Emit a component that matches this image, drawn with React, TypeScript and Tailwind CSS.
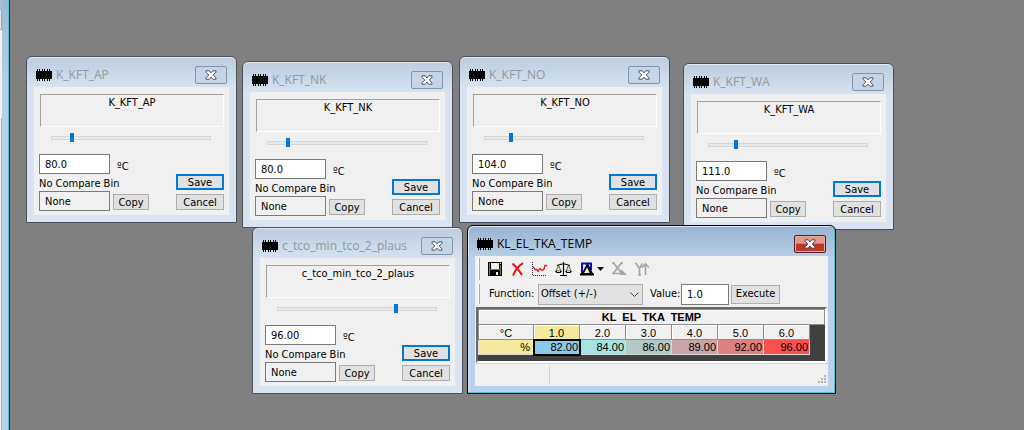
import React from "react";

const UI_FONT = "font-['DejaVu_Sans_Condensed','Noto_Sans',sans-serif]";

function ChipIcon() {
  return (
    <svg width="16" height="12" viewBox="0 0 16 12" shapeRendering="crispEdges" aria-hidden="true">
      <rect x="0" y="2" width="16" height="8" fill="#000" />
      <path
        d="M1 0h1v2h-1zM3 0h1v2h-1zM6 0h1v2h-1zM8 0h1v2h-1zM11 0h1v2h-1zM13 0h1v2h-1zM1 10h1v2h-1zM3 10h1v2h-1zM6 10h1v2h-1zM8 10h1v2h-1zM11 10h1v2h-1zM13 10h1v2h-1z"
        fill="#000"
      />
    </svg>
  );
}

function CloseGlyph({ edge }: { edge: string }) {
  return (
    <svg width="12" height="10" viewBox="0 0 12 10" aria-hidden="true">
      <path
        d="M1 .8h3.2L6 2.9 7.800 .8H11v1.400L8.200 5 11 7.800v1.400H7.800L6 7.100 4.200 9.200H1V7.800L3.800 5 1 2.200z"
        fill="#fff"
        stroke={edge}
        strokeWidth="1"
        strokeLinejoin="round"
      />
    </svg>
  );
}

type DialogProps = {
  title: string;
  value: string;
  position: number;
  place: string;
};

function ParameterDialog({ title, value, position, place }: DialogProps) {
  const button =
    "flex h-4 items-center justify-center whitespace-nowrap bg-[#e1e1e1] text-[11px] leading-none";
  return (
    <section
      aria-label={title}
      className={`absolute w-[211px] rounded-t-md border border-[#4b4f56] bg-[#d8e4f1] bg-linear-to-b from-[#bccddf] from-0% to-[#d8e4f1] to-20% px-[7px] pb-[7px] shadow-[inset_0_1px_0_#e4edf6] ${place}`}
    >
      <header className="flex h-[30px] items-center gap-1 pl-[2px] pr-[2px] pt-[6px]">
        <ChipIcon />
        <h2 className="flex-1 whitespace-nowrap font-['Open_Sans','Noto_Sans',sans-serif] text-[12px] leading-4 text-[#8f979f]">
          {title}
        </h2>
        <button
          type="button"
          aria-label="Close"
          className="flex h-[18px] w-8 items-center justify-center rounded-xs border border-[#8393ab] bg-[#c6d5e6]"
        >
          <CloseGlyph edge="#4a5361" />
        </button>
      </header>
      <div className="bg-[#f0f0f0] px-[5px] pb-1 pt-[7px]">
        <p className="ml-px h-[33px] border border-b-white border-l-[#a0a0a0] border-r-white border-t-[#a0a0a0] text-center text-[11px] leading-4">
          {title}
        </p>
        <input
          type="range"
          aria-label={`${title} level`}
          min={0}
          max={156}
          defaultValue={position}
          className="mx-3 mb-3 mt-[6px] block h-[9px] w-40 appearance-none bg-transparent [&::-webkit-slider-runnable-track]:h-1 [&::-webkit-slider-runnable-track]:border [&::-webkit-slider-runnable-track]:border-[#d6d6d6] [&::-webkit-slider-runnable-track]:bg-[#e7eaea] [&::-webkit-slider-thumb]:-mt-1 [&::-webkit-slider-thumb]:h-[9px] [&::-webkit-slider-thumb]:w-1 [&::-webkit-slider-thumb]:appearance-none [&::-webkit-slider-thumb]:bg-[#0078d7]"
        />
        <div className="flex h-5 items-end gap-[7px]">
          <input
            type="text"
            aria-label={`${title} value`}
            defaultValue={value}
            className="h-5 w-[71px] border border-[#7a7a7a] bg-white px-[5px] text-[11px] leading-none"
          />
          <span className="text-[11px] leading-[14px]">ºC</span>
        </div>
        <div className="flex items-end justify-between">
          <div>
            <label htmlFor={`${title}-bin`} className="block h-[17px] whitespace-nowrap pt-[2px] text-[11px] leading-4">
              No Compare Bin
            </label>
            <div className="flex items-end gap-[3px]">
              <input
                id={`${title}-bin`}
                type="text"
                readOnly
                defaultValue="None"
                className="h-5 w-[71px] border border-[#7a7a7a] bg-[#f0f0f0] px-[5px] text-[11px] leading-none"
              />
              <button type="button" className={`${button} mb-px w-9 border border-[#adadad]`}>
                Copy
              </button>
            </div>
          </div>
          <div className="flex flex-col gap-1 pb-px">
            <button type="button" className={`${button} w-12 border-2 border-[#0078d7]`}>
              Save
            </button>
            <button type="button" className={`${button} w-12 border border-[#adadad]`}>
              Cancel
            </button>
          </div>
        </div>
      </div>
    </section>
  );
}

function SaveIcon() {
  return (
    <svg width="14" height="14" viewBox="0 0 14 14" shapeRendering="crispEdges" aria-hidden="true">
      <rect width="14" height="14" fill="#000" />
      <path d="M1 1h1v12h-1zM12 3h1v10h-1zM2 7h10v1h-10z" fill="#7d7d32" />
      <rect x="3" y="1" width="8" height="6" fill="#f0f0f0" />
      <rect x="12" y="1" width="1" height="1" fill="#f0f0f0" />
      <rect x="8" y="10" width="2" height="3" fill="#f0f0f0" />
    </svg>
  );
}

function DeleteIcon() {
  return (
    <svg width="14" height="14" viewBox="0 0 14 14" aria-hidden="true">
      <path d="M2.500 1.500C5.500 4 9.500 8.500 12 13M13 1C8.500 4 5 8.500 3 13.500" fill="none" stroke="#e80c0c" strokeWidth="2" />
    </svg>
  );
}

function GraphIcon() {
  return (
    <svg width="15" height="14" viewBox="0 0 15 14" aria-hidden="true">
      <path d="M.5 0v13.500H15" fill="none" stroke="#222" strokeDasharray="1 1" />
      <path d="M1 4.500l2 3h2l1 2 2-3 2 2 2-1.500 1-3.500H15" fill="none" stroke="#d8181c" strokeWidth="1.300" />
    </svg>
  );
}

function BalanceIcon() {
  return (
    <svg width="17" height="15" viewBox="0 0 17 15" aria-hidden="true">
      <path d="M8.500 0v13M2 3.500L7 2h3l5 1.500M5 13.500h7" fill="none" stroke="#000" strokeWidth="1.200" />
      <path d="M3.500 3.500L1 9h5zM13.500 3.500L11 9h5z" fill="#f5efb0" stroke="#333" strokeWidth=".8" />
      <path d="M0 9h7l-1.500 2h-4zM10 9h7l-1.500 2h-4z" fill="#000" />
      <path d="M2 9h3v1H2zM12 9h3v1h-3z" fill="#e7dc6b" />
    </svg>
  );
}

function DeltaIcon() {
  return (
    <svg width="14" height="14" viewBox="0 0 14 14" aria-hidden="true">
      <path d="M2 12V1.500H11V8" fill="none" stroke="#0808e0" strokeWidth="2" />
      <path d="M7.500 2.500L2.500 12h9.500z" fill="#f0f0f0" stroke="#000" strokeWidth="1.800" />
      <path d="M7.500 1L13.500 13h-3L6.500 4z" fill="#000" />
      <path d="M0 12.500h14" stroke="#000" strokeWidth="2" />
    </svg>
  );
}

function AxisXIcon() {
  return (
    <svg width="15" height="14" viewBox="0 0 15 14" aria-hidden="true">
      <path d="M1.500 1L9.500 11M9.500 1L1.500 11M0 1h3M8 1h3M0 11.500h10" fill="none" stroke="#a6a6a6" strokeWidth="1.700" />
      <path d="M9 7l6 6H8z" fill="#a6a6a6" />
    </svg>
  );
}

function AxisYIcon() {
  return (
    <svg width="14" height="14" viewBox="0 0 14 14" aria-hidden="true">
      <path d="M1 1.500l3.500 5 3-5M4.500 6v7M10.500 13V2M7 5.500L10.500 2 14 5.500M0 1.500h2M3 13h3" fill="none" stroke="#a6a6a6" strokeWidth="1.700" />
    </svg>
  );
}

const cells = [
  { axis: "1.0", value: "82.00", tone: "bg-[#8cc8e8]" },
  { axis: "2.0", value: "84.00", tone: "bg-[#a6e4e2]" },
  { axis: "3.0", value: "86.00", tone: "bg-[#b3c9c7]" },
  { axis: "4.0", value: "89.00", tone: "bg-[#c8a4a4]" },
  { axis: "5.0", value: "92.00", tone: "bg-[#dc8080]" },
  { axis: "6.0", value: "96.00", tone: "bg-[#fb5050]" },
];

function ToolButton({ label, children }: { label: string; children: React.ReactNode }) {
  return (
    <button type="button" aria-label={label} className="flex h-6 items-center">
      {children}
    </button>
  );
}

function Grip({ size }: { size: string }) {
  return <span className={`w-[2px] border-r border-[#a8a8a8] bg-white ${size}`} />;
}

function CurveWindow() {
  return (
    <section
      aria-label="KL_EL_TKA_TEMP"
      className="absolute left-[467px] top-[225px] w-[369px] rounded-t-md border border-black bg-[#b9d1ea] bg-linear-to-b from-[#98b4d1] to-[#b9d1ea] to-20% px-[7px] pb-[7px] shadow-[inset_-1px_-1px_0_#48c5dc,inset_1px_1px_0_#dbe7f3]"
    >
      <header className="flex h-[30px] items-center gap-1 pl-[2px] pr-[2px] pt-[6px]">
        <ChipIcon />
        <h2 className="flex-1 whitespace-nowrap font-['Open_Sans','Noto_Sans',sans-serif] text-[12px] leading-4 text-black">
          KL_EL_TKA_TEMP
        </h2>
        <button
          type="button"
          aria-label="Close"
          className="flex h-[18px] w-8 items-center justify-center rounded-xs border border-[#52202a] bg-linear-to-b from-[#e29a8e] from-45% to-[#bb3a25] to-50% shadow-[inset_0_0_0_1px_#e8a79c]"
        >
          <CloseGlyph edge="#5c3a44" />
        </button>
      </header>
      <div className="bg-[#f0f0f0]">
        <div className="flex h-[26px] items-center pl-[3px]">
          <Grip size="h-[22px]" />
          <div className="flex items-center gap-2 pl-2">
            <ToolButton label="Save">
              <SaveIcon />
            </ToolButton>
            <ToolButton label="Delete">
              <DeleteIcon />
            </ToolButton>
            <ToolButton label="Graph">
              <GraphIcon />
            </ToolButton>
            <ToolButton label="Compare">
              <BalanceIcon />
            </ToolButton>
            <ToolButton label="Difference">
              <DeltaIcon />
              <svg width="7" height="4" viewBox="0 0 7 4" className="ml-[3px]" aria-hidden="true">
                <path d="M0 0h7L3.500 4z" fill="#111" />
              </svg>
            </ToolButton>
            <ToolButton label="X axis">
              <AxisXIcon />
            </ToolButton>
            <ToolButton label="Y axis">
              <AxisYIcon />
            </ToolButton>
          </div>
        </div>
        <div className="flex h-6 items-center pl-[3px] text-[11px]">
          <Grip size="h-5" />
          <label htmlFor="function" className="w-[58px] pl-[9px]">
            Function:
          </label>
          <div className="relative">
            <select
              id="function"
              className="block h-[21px] w-[105px] appearance-none border border-[#adadad] bg-[#e1e1e1] pl-[2px] text-[11px]"
            >
              <option>Offset (+/-)</option>
            </select>
            <svg width="9" height="6" viewBox="0 0 9 6" className="pointer-events-none absolute right-1 top-2" aria-hidden="true">
              <path d="M.5 .5l4 4 4-4" fill="none" stroke="#444" />
            </svg>
          </div>
          <label htmlFor="amount" className="w-[38px] pl-[7px]">
            Value:
          </label>
          <input
            id="amount"
            type="text"
            defaultValue="1.0"
            className="h-[21px] w-12 border border-[#7a7a7a] bg-white px-[5px] text-[11px]"
          />
          <button
            type="button"
            className="ml-[2px] flex h-[19px] w-[49px] items-center justify-center border border-[#adadad] bg-[#e1e1e1]"
          >
            Execute
          </button>
        </div>
        <div className="ml-px mr-px mt-px border-2 border-b-white border-l-[#696969] border-r-white border-t-[#696969] bg-[#404040] pb-[6px] font-['Liberation_Sans',Arial,sans-serif] text-[11px] leading-[13px]">
          <table className="w-full table-fixed border-collapse">
            <colgroup>
              <col className="w-[55px]" />
              <col className="w-[46px]" />
              <col className="w-[46px]" />
              <col className="w-[46px]" />
              <col className="w-[46px]" />
              <col className="w-[46px]" />
              <col className="w-[46px]" />
              <col />
            </colgroup>
            <thead>
              <tr>
                <th
                  colSpan={8}
                  className="h-[15px] whitespace-pre border border-[#8c8c8c] bg-[#f0f0f0] p-0 text-center font-bold shadow-[inset_1px_1px_0_#fff]"
                >
                  {"KL  EL  TKA  TEMP"}
                </th>
              </tr>
              <tr>
                <th className="h-[15px] border border-[#8c8c8c] bg-[#f0f0f0] p-0 pt-px font-normal leading-3 shadow-[inset_1px_1px_0_#fff]">
                  °C
                </th>
                {cells.map((c, i) => (
                  <th
                    key={c.axis}
                    className={`h-[15px] border border-[#8c8c8c] p-0 pt-px font-normal leading-3 shadow-[inset_1px_1px_0_#fff] ${i === 0 ? "bg-[#f5e99b]" : "bg-[#f0f0f0]"}`}
                  >
                    {c.axis}
                  </th>
                ))}
                <td />
              </tr>
            </thead>
            <tbody>
              <tr>
                <th className="h-[15px] border border-[#d8d8d8] bg-[#f5e99b] p-0 pr-[3px] text-right font-normal">%</th>
                {cells.map((c, i) => (
                  <td
                    key={c.axis}
                    className={`h-[15px] border border-[#d8d8d8] p-0 pr-px text-right ${c.tone} ${i === 0 ? "outline-2 -outline-offset-1 outline-black" : ""}`}
                  >
                    {c.value}
                  </td>
                ))}
                <td />
              </tr>
            </tbody>
          </table>
        </div>
        <footer className="flex h-[23px] items-end border-t border-[#d4d4d4] pb-[2px]">
          <span className="h-[18px] w-[75px] border-r border-[#d0d0d0]" />
          <svg width="9" height="9" viewBox="0 0 9 9" className="ml-auto mr-px" shapeRendering="crispEdges" aria-hidden="true">
            <path d="M6 0h2v2H6zM3 3h2v2H3zM6 3h2v2H6zM0 6h2v2H0zM3 6h2v2H3zM6 6h2v2H6z" fill="#b4b4b4" />
          </svg>
        </footer>
      </div>
    </section>
  );
}

export default function App() {
  return (
    <main className={`relative flex min-h-screen overflow-hidden bg-[#808080] text-black ${UI_FONT}`}>
      <aside className="flex w-[10px] border-r border-[#0e3f4e] bg-[#b9d1ea]">
        <div className="flex w-[2px] flex-col bg-[#f0f0f0]">
          <div className="h-[9px] bg-[#a9c0da]" />
          <div className="h-[21px] border-y border-r border-[#a6a6a6] bg-[#e4e4e4]" />
          <div className="h-[88px]" />
          <div className="flex-1 border-r border-[#b0b0b0]" />
        </div>
        <div className="flex-1 border-r border-[#53bfd6] bg-linear-to-b from-[#9db9d6] to-[#b9cfe8] to-20%" />
      </aside>
      <ParameterDialog title="K_KFT_AP" value="80.0" position={18} place="left-[26px] top-[56px]" />
      <ParameterDialog title="K_KFT_NK" value="80.0" position={18} place="left-[242px] top-[61px]" />
      <ParameterDialog title="K_KFT_NO" value="104.0" position={24} place="left-[459px] top-[56px]" />
      <ParameterDialog title="K_KFT_WA" value="111.0" position={25} place="left-[683px] top-[63px]" />
      <ParameterDialog title="c_tco_min_tco_2_plaus" value="96.00" position={117} place="left-[252px] top-[227px]" />
      <CurveWindow />
    </main>
  );
}
